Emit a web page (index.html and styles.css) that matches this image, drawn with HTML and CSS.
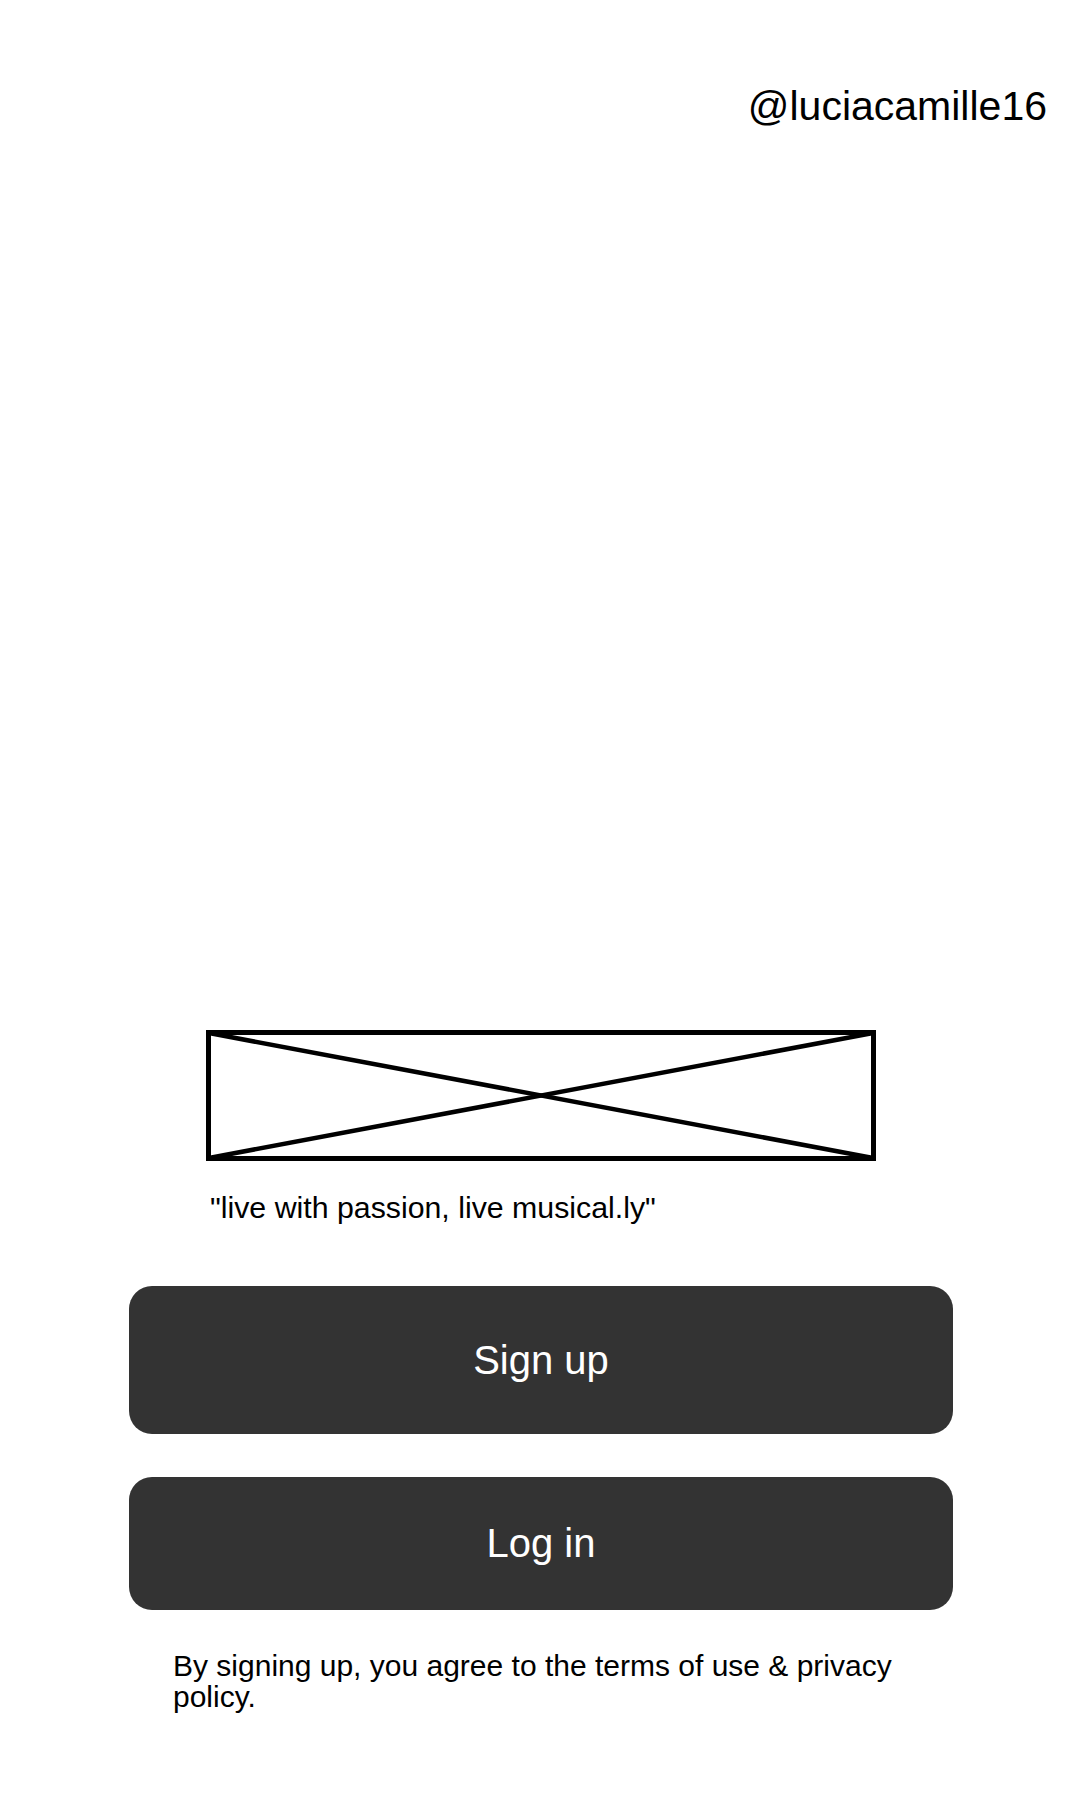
FILE: index.html
```html
<!DOCTYPE html>
<html lang="en">
<head>
<meta charset="utf-8">
<title>musical.ly</title>
<link rel="stylesheet" href="styles.css">
</head>
<body>
<div class="page">
  <header class="header">@luciacamille16</header>
  <div class="logo">
    <svg class="logo-svg" width="670" height="131" viewBox="0 0 670 131" xmlns="http://www.w3.org/2000/svg">
      <line x1="3" y1="3" x2="667" y2="128" stroke="#000" stroke-width="4.5"/>
      <line x1="3" y1="128" x2="667" y2="3" stroke="#000" stroke-width="4.5"/>
      <rect x="2.5" y="2.5" width="665" height="126" fill="none" stroke="#000" stroke-width="5"/>
    </svg>
  </div>
  <p class="tagline">"live with passion, live musical.ly"</p>
  <button class="btn btn-signup">Sign up</button>
  <button class="btn btn-login">Log in</button>
  <p class="terms">By signing up, you agree to the terms of use &amp; privacy policy.</p>
</div>
</body>
</html>
```
FILE: styles.css
```css
html, body {
  margin: 0;
  padding: 0;
  background: #ffffff;
}

.page {
  width: 1080px;
  height: 1800px;
  display: flex;
  flex-direction: column;
  font-family: "Liberation Sans", Arial, sans-serif;
  color: #000;
  overflow: hidden;
}

.header {
  padding: 86px 33px 0 0;
  text-align: right;
  font-size: 41px;
  line-height: 40px;
}

.logo {
  margin: 904px 0 0 206px;
  width: 670px;
  height: 131px;
}

.logo-svg {
  display: block;
}

.tagline {
  margin: 30px 0 0 210px;
  font-size: 30.3px;
  line-height: 34px;
}

.btn {
  display: flex;
  align-items: center;
  justify-content: center;
  margin: 0 0 0 129px;
  width: 824px;
  border: none;
  border-radius: 23px;
  background: #333333;
  color: #ffffff;
  font-family: "Liberation Sans", Arial, sans-serif;
  font-size: 40px;
  padding: 0;
}

.btn-signup {
  margin-top: 61px;
  height: 148px;
}

.btn-login {
  margin-top: 43px;
  height: 133px;
}

.terms {
  margin: 40px 0 0 173px;
  width: 740px;
  font-size: 30px;
  line-height: 31px;
}
```
